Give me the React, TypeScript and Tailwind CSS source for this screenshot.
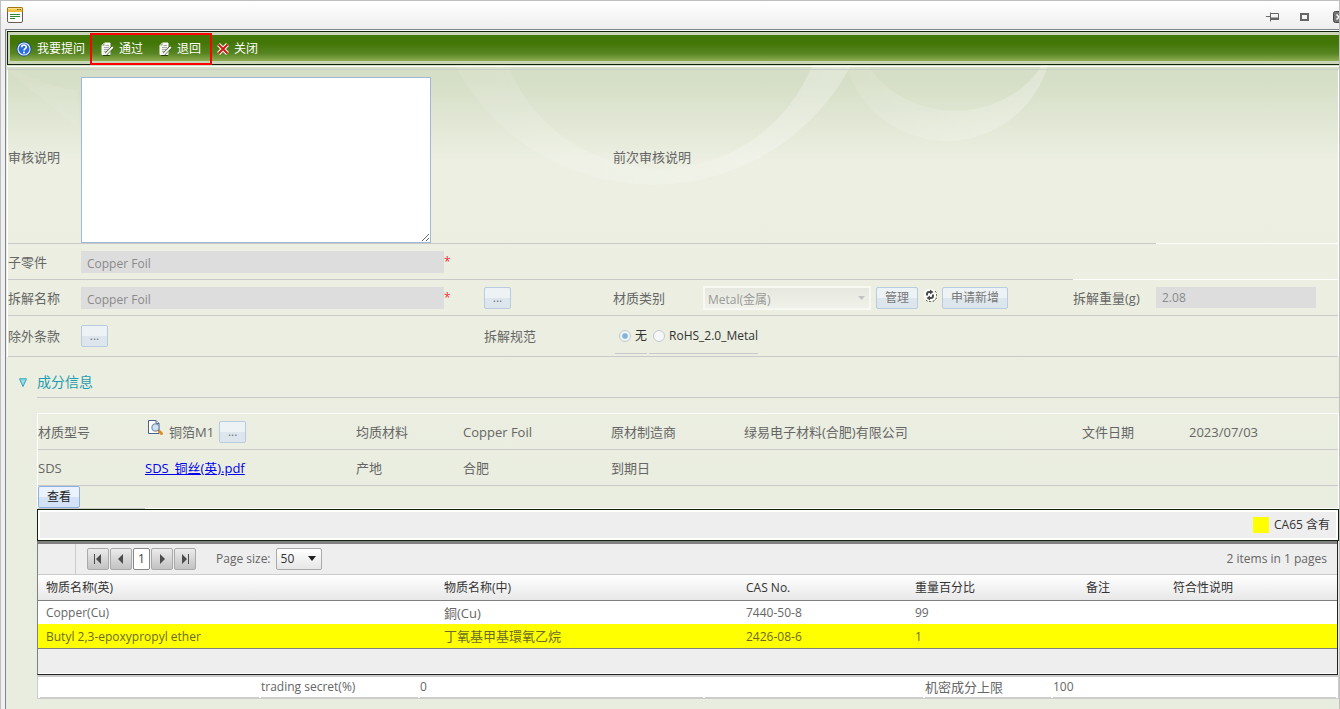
import type { ReactNode } from "react"
import { clsx } from "clsx"

const substances = [
  { en: "Copper(Cu)", zh: "銅(Cu)", cas: "7440-50-8", percent: "99", flagged: false },
  { en: "Butyl 2,3-epoxypropyl ether", zh: "丁氧基甲基環氧乙烷", cas: "2426-08-6", percent: "1", flagged: true },
]

/* ---------- icons ---------- */

function FormIcon() {
  return (
    <svg width="16" height="16" viewBox="0 0 16 16">
      <rect x="0.5" y="0.5" width="15" height="15" rx="1.5" fill="#fff" stroke="#6b5a52" />
      <path d="M1 1h14v4H1z" fill="#f4c03c" />
      <path d="M1 1h14v1.5H1z" fill="#fbe08a" />
      <path d="M.5 5V1.5a1 1 0 0 1 1-1h13a1 1 0 0 1 1 1V5" fill="none" stroke="#a8760e" />
      <path d="M10 2h1.5v1H10zM12.5 2H14v1h-1.5z" fill="#7a5a10" />
      <path d="M3 7.5h10M3 9.5h10M3 11.5h5" stroke="#2f8a2f" />
    </svg>
  )
}

function HelpIcon() {
  return (
    <svg width="16" height="16" viewBox="0 0 16 16">
      <circle cx="8" cy="8" r="7.5" fill="#1b4f8f" />
      <circle cx="8" cy="8" r="6" fill="#2a6be0" stroke="#dcebff" strokeWidth="1.2" />
      <path d="M5.7 6.3C5.7 3.3 10.4 3.4 10.3 6.1 10.2 7.7 8 7.6 8 9.6" fill="none" stroke="#fff" strokeWidth="1.6" />
      <circle cx="8" cy="11.6" r="1" fill="#fff" />
    </svg>
  )
}

function EditIcon() {
  return (
    <svg width="13" height="14" viewBox="0 0 13 14">
      <path d="M3.5 1H9v11.5H1V3.5z" fill="#f2f2f2" stroke="#fff" />
      <path d="M1 3.5 3.5 1v2.5z" fill="#9aa88a" />
      <path d="M4.5 3.5H8M3 5.5h5M3 7.5h4M3 9.5h3" stroke="#aaa" />
      <path d="m5 12 6.5-7" stroke="#24420a" strokeWidth="3" />
      <path d="m4.8 12.2 7-7.2" stroke="#fff" strokeWidth="1.8" />
      <path d="M2 13.5h7" stroke="#24420a" />
    </svg>
  )
}

function CrossIcon() {
  return (
    <svg width="12" height="12" viewBox="0 0 12 12">
      <path d="m1.5 1.5 9 9M10.5 1.5l-9 9" stroke="#fff" strokeWidth="4" />
      <path d="m1.5 1.5 9 9M10.5 1.5l-9 9" stroke="#d3150c" strokeWidth="2" />
    </svg>
  )
}

function RefreshIcon() {
  return (
    <svg width="14" height="14" viewBox="0 0 14 14">
      <circle cx="7" cy="7" r="6.2" fill="#fff" />
      <path d="M12 3a6.3 6.3 0 0 1-9 9" fill="none" stroke="#2f4a12" strokeDasharray="2 1.5" />
      <path d="M8 4H6a2 2 0 0 0-2 2v1.5M6 10h2a2 2 0 0 0 2-2V6.500" fill="none" stroke="#4a4a4a" strokeWidth="2" />
      <path d="M7 1.5 10.5 4 7 6.5zM7 7.5 3.5 10 7 12.5z" fill="#4a4a4a" />
    </svg>
  )
}

function PreviewIcon() {
  return (
    <svg width="16" height="16" viewBox="0 0 16 16">
      <path d="M.5.5H8l3 3v10H.5z" fill="#fff" stroke="#4b6488" />
      <path d="M8 .5v3h3" fill="#d5e1f2" stroke="#4b6488" />
      <circle cx="7.5" cy="7.5" r="3.6" fill="#cfe2f5" stroke="#8296ab" strokeWidth="1.3" />
      <path d="m10.3 10.3 1.7 1.7" stroke="#55697f" strokeWidth="1.5" />
      <path d="m11.5 11.5 2 2" stroke="#e08a22" strokeWidth="3" strokeLinecap="round" />
    </svg>
  )
}

function PinIcon() {
  return (
    <svg width="14" height="10" viewBox="0 0 14 10">
      <path d="M0 4.5h4.5M4.5.5v9M5 1.5h7.5v6H5" fill="none" stroke="#666" />
      <path d="M5 5.5h8V8H5z" fill="#666" />
    </svg>
  )
}

function CloseIcon() {
  return (
    <svg width="12" height="12" viewBox="0 0 12 12">
      <rect x="0.5" y="0.5" width="11" height="11" rx="2" fill="#777" stroke="#444" />
      <path d="m3.5 3.5 5 5M8.5 3.5l-5 5" stroke="#fff" strokeWidth="1.5" />
    </svg>
  )
}

/* pale rings behind the top of the form */
function Swirls() {
  return (
    <svg className="pointer-events-none absolute left-0 top-0" width="1100" height="180" viewBox="6 30 1100 180">
      <defs>
        <linearGradient id="ring" x1="0" x2="1" y1="0" y2="0">
          <stop offset="0" stopColor="#fff" stopOpacity="0.08" />
          <stop offset="1" stopColor="#fff" stopOpacity="0.28" />
        </linearGradient>
      </defs>
      <path d="M440 30A224 224 0 0 0 866 30H822A164 164 0 0 1 498 30z" fill="url(#ring)" />
      <path d="M842 36A105 105 0 0 0 1052 36H1053A99 87 0 0 1 857 36z" fill="url(#ring)" />
      <path d="M8 70c20 20 40 30 70 60V90C55 90 30 75 8 68z" fill="#fff" fillOpacity="0.08" />
    </svg>
  )
}

/* ---------- small controls ---------- */

function ToolbarButton({ icon, children }: { icon: ReactNode; children: ReactNode }) {
  return (
    <button type="button" className="flex items-center gap-[5px] text-xs text-white">
      {icon}
      {children}
    </button>
  )
}

function FormButton({ children, wide, muted = true }: { children: ReactNode; wide?: boolean; muted?: boolean }) {
  return (
    <button
      type="button"
      className={clsx(
        "h-[22px] shrink-0 rounded-xs border text-xs leading-5",
        wide ? "px-2" : "w-[27px]",
        muted
          ? "border-[#b8cbe0] bg-linear-to-b from-[#edf2f4] from-50% to-[#dde6ec] to-50% text-[#777]"
          : "border-[#8fb0dc] bg-linear-to-b from-[#eaf2fd] from-50% to-[#d3e2f6] to-50% text-[#222]"
      )}
    >
      {children}
    </button>
  )
}

function Cell({ children, className, blank }: { children?: ReactNode; className?: string; blank?: boolean }) {
  return (
    <div className={clsx("flex items-center border-b", blank ? "border-white" : "border-[#c9c9c9]", className)}>
      {children}
    </div>
  )
}

function PagerButton({ label, d }: { label: string; d: string }) {
  return (
    <button
      type="button"
      aria-label={label}
      className="flex h-[22px] w-[22px] items-center justify-center rounded-xs border border-[#aaa] bg-linear-to-b from-[#ececec] to-[#c2c2c2]"
    >
      <svg width="10" height="10" viewBox="0 0 10 10">
        <path d={d} fill="#4c4c4c" />
      </svg>
    </button>
  )
}

const disabledInput = "bg-[#ddd] px-1.5 text-xs text-[#8a8a8a]"

function ReviewForm() {
  return (
    <form className="grid grid-cols-[73px_403px_129px_90px_370px_83px_1fr] border-x border-t border-x-white border-t-[#c9cfc4]">
      <Cell className="h-[174px]">
        <label htmlFor="note">审核说明</label>
      </Cell>
      <Cell className="pt-[7px]">
        <textarea id="note" className="block h-[166px] w-[350px] border border-[#a0b8d8] bg-white p-1 text-xs" />
      </Cell>
      <Cell />
      <Cell className="col-span-3">前次审核说明</Cell>
      <Cell blank />

      <Cell className="h-9">
        <label htmlFor="part">子零件</label>
      </Cell>
      <Cell className="col-span-4">
        <input id="part" disabled defaultValue="Copper Foil" className={clsx(disabledInput, "h-[22px] w-[363px] pt-1")} />
        <span className="text-xs text-red-500">*</span>
      </Cell>
      <Cell blank className="col-span-2" />

      <Cell className="h-9">
        <label htmlFor="name">拆解名称</label>
      </Cell>
      <Cell>
        <input id="name" disabled defaultValue="Copper Foil" className={clsx(disabledInput, "h-[22px] w-[363px] pt-1")} />
        <span className="text-xs text-red-500">*</span>
      </Cell>
      <Cell>
        <FormButton>...</FormButton>
      </Cell>
      <Cell>
        <label htmlFor="category">材质类别</label>
      </Cell>
      <Cell>
        <div className="relative mr-[5px]">
          <select
            id="category"
            disabled
            className="block h-6 w-[168px] appearance-none border-2 border-[#f7f8f2] bg-linear-to-b from-[#e6e8df] to-[#f0f2ea] px-[3px] pt-1 text-xs text-[#999] opacity-100"
          >
            <option>Metal(金属)</option>
          </select>
          <svg className="pointer-events-none absolute right-1.5 top-2.5" width="7" height="4" viewBox="0 0 7 4">
            <path d="M0 0h7L3.5 4z" fill="#c4c4c4" />
          </svg>
        </div>
        <FormButton wide>管理</FormButton>
        <button type="button" aria-label="刷新" className="mx-[5px] pb-1.5">
          <RefreshIcon />
        </button>
        <FormButton wide>申请新增</FormButton>
      </Cell>
      <Cell>
        <label htmlFor="weight">拆解重量(g)</label>
      </Cell>
      <Cell>
        <input id="weight" disabled defaultValue="2.08" className={clsx(disabledInput, "h-[21px] w-40")} />
      </Cell>

      <Cell className="h-[41px]">除外条款</Cell>
      <Cell>
        <FormButton>...</FormButton>
      </Cell>
      <Cell>拆解规范</Cell>
      <Cell className="col-span-4 items-end gap-0.5 pb-0.5 pl-0.5 text-xs text-[#333]">
        {["无", "RoHS_2.0_Metal"].map((spec, i) => (
          <label key={spec} className="flex h-9 items-center gap-1 border-b border-[#c9c9c9] pl-1">
            <input
              type="radio"
              name="spec"
              defaultChecked={i === 0}
              className="h-3 w-3 appearance-none rounded-full border border-[#c4c8cc] bg-[#f6f7f8] checked:bg-radial checked:from-[#7fb2d6] checked:from-30% checked:to-[#eef3f6] checked:to-50%"
            />
            {spec}
          </label>
        ))}
      </Cell>
    </form>
  )
}

function MaterialInfo() {
  return (
    <div className="grid grid-cols-[107px_211px_107px_148px_133px_338px_107px_1fr] border-l border-t border-r border-white">
      <Cell className="h-9">材质型号</Cell>
      <Cell>
        <span className="mr-[5px] pb-2 pl-[3px]">
          <PreviewIcon />
        </span>
        <span className="mr-[5px]">铜箔M1</span>
        <FormButton>...</FormButton>
      </Cell>
      <Cell>均质材料</Cell>
      <Cell>Copper Foil</Cell>
      <Cell>原材制造商</Cell>
      <Cell>绿易电子材料(合肥)有限公司</Cell>
      <Cell>文件日期</Cell>
      <Cell>2023/07/03</Cell>

      <Cell className="h-9">SDS</Cell>
      <Cell>
        <a href="#sds" className="text-[#0000ee] underline">
          SDS_铜丝(英).pdf
        </a>
      </Cell>
      <Cell>产地</Cell>
      <Cell>合肥</Cell>
      <Cell className="col-span-4">到期日</Cell>

      <Cell>
        <FormButton wide muted={false}>
          查看
        </FormButton>
      </Cell>
      <Cell blank className="col-span-7" />
    </div>
  )
}

function SubstanceGrid() {
  return (
    <div className="mr-px border-x border-b border-l-[#808080] border-r-[#222] border-b-[#222] bg-white">
      <div className="flex h-[34px] items-center border-b border-t-3 border-b-[#ccc] border-t-[#808080] bg-[#eee] pr-2.5 text-xs text-[#666]">
        <span className="mr-[11px] w-[38px] self-stretch border-r border-[#ccc]" />
        <div className="flex gap-px">
          <PagerButton label="First page" d="M1 0h1v10H1zM8 0v10L3 5z" />
          <PagerButton label="Previous page" d="M7 0v10L2 5z" />
          <button type="button" className="h-[22px] w-[17px] rounded-xs border border-[#888] bg-white text-[#444]">
            1
          </button>
          <PagerButton label="Next page" d="M3 0v10l5-5z" />
          <PagerButton label="Last page" d="M8 0h1v10H8zM2 0v10l5-5z" />
        </div>
        <label htmlFor="page-size" className="ml-5 mr-[5px]">
          Page size:
        </label>
        <div className="relative">
          <select
            id="page-size"
            className="block h-[22px] w-[46px] appearance-none rounded-xs border border-[#aaa] bg-linear-to-b from-white to-[#e6e6e6] px-1 text-xs text-[#333]"
          >
            <option>50</option>
          </select>
          <svg className="pointer-events-none absolute right-1.5 top-2" width="8" height="5" viewBox="0 0 8 5">
            <path d="M0 0h8L4 5z" fill="#222" />
          </svg>
        </div>
        <span className="ml-auto">2 items in 1 pages</span>
      </div>
      <table className="w-full table-fixed border-collapse text-left text-xs">
        <colgroup>
          <col className="w-[398px]" />
          <col className="w-[302px]" />
          <col className="w-[169px]" />
          <col className="w-[171px]" />
          <col className="w-[87px]" />
          <col />
        </colgroup>
        <thead className="bg-linear-to-b from-white to-[#e8e8e8] text-[#333]">
          <tr className="h-[25px] border-b border-[#808080]">
            {["物质名称(英)", "物质名称(中)", "CAS No.", "重量百分比", "备注", "符合性说明"].map((head) => (
              <th key={head} className="px-2 pt-0.5 font-normal">
                {head}
              </th>
            ))}
          </tr>
        </thead>
        <tbody className="text-[#666]">
          {substances.map((row) => (
            <tr key={row.cas} className={clsx("h-6", row.flagged && "bg-[#ffff00] text-[#6b6b2a]")}>
              <td className="px-2 pt-0.5">{row.en}</td>
              <td className="px-2 pt-0.5 text-[13px]">{row.zh}</td>
              <td className="px-2 pt-0.5">{row.cas}</td>
              <td className="px-2 pt-0.5">{row.percent}</td>
              <td />
              <td />
            </tr>
          ))}
        </tbody>
      </table>
      <div className="h-[26px] border-b border-t border-b-white border-t-[#808080] bg-[#eee]" />
    </div>
  )
}

function SecretLimits() {
  const line = "border-b border-[#ccc]"
  return (
    <div className="grid h-6 grid-cols-[219px_157px_283px_218px_126px_1fr] gap-0.5 border border-t-2 border-[#ccc] bg-white px-0.5 pb-0.5 text-xs leading-5">
      <span className={line} />
      <span className={line}>trading secret(%)</span>
      <span className={line}>0</span>
      <span className={line} />
      <span className={clsx(line, "text-[13px] leading-5")}>机密成分上限</span>
      <span className={line}>100</span>
    </div>
  )
}

export default function App() {
  return (
    <div className="flex min-h-screen flex-col overflow-hidden border border-[#bfbfbf] bg-[#f0f0f0] font-['Open_Sans','Noto_Sans_CJK_SC',sans-serif] text-[13px] leading-5 text-[#666]">
      <header className="flex h-7 shrink-0 items-center bg-linear-to-b from-white to-[#eee] pl-1.5">
        <FormIcon />
        <div className="-mr-1.5 ml-auto flex items-center gap-5 pt-1">
          <button type="button" aria-label="Pin">
            <PinIcon />
          </button>
          <button type="button" aria-label="Maximize" className="h-2 w-[9px] border-2 border-[#666]" />
          <button type="button" aria-label="Close" className="ml-1">
            <CloseIcon />
          </button>
        </div>
      </header>

      <main className="relative ml-1 grow border-l border-t border-[#7d8790] bg-linear-to-b from-[#d5dec6] from-[50px] via-[#ecefe2] via-[130px] to-[#e9ede0] pl-px">
        <Swirls />
        <div className="relative border-t border-white">
          <nav className="flex h-[34px] items-center border-y border-l border-[#14230c] bg-[#cbd6b8] py-[3px] pl-0.5">
            <div className="flex h-full grow items-center bg-linear-to-b from-[#427606] from-30% via-[#568420] via-70% to-[#8dad50] pl-1.5 pt-0.5">
              <ToolbarButton icon={<HelpIcon />}>我要提问</ToolbarButton>
              <div className="relative ml-1 flex gap-4 px-3">
                <ToolbarButton icon={<EditIcon />}>通过</ToolbarButton>
                <ToolbarButton icon={<EditIcon />}>退回</ToolbarButton>
                <span className="pointer-events-none absolute -inset-y-2 inset-x-px border-2 border-[#f00]" />
              </div>
              <div className="ml-1">
                <ToolbarButton icon={<CrossIcon />}>关闭</ToolbarButton>
              </div>
            </div>
          </nav>
          <div className="mt-px h-[3px] border-t border-white" />

          <ReviewForm />

          <section className="pl-[30px]">
            <div className="flex h-[41px] items-center border-b border-[#c9c9c9]">
              <h2 className="-ml-[18px] flex items-center gap-2.5 pt-2.5 text-sm text-[#1f9daf]">
                <svg width="8" height="9" viewBox="0 0 8 9">
                  <path d="M.5.8h7L4 8.5z" fill="#9bdbe5" stroke="#2da5b8" />
                </svg>
                成分信息
              </h2>
            </div>
            <div className="pb-2.5 pt-[15px]">
              <MaterialInfo />
              <div className="flex h-8 items-center justify-end gap-[5px] border border-[#14230c] bg-[#eee] pr-2 text-xs text-[#333] ring-2 ring-white ring-inset">
                <span className="h-4 w-4 bg-[#ffff00]" />
                CA65 含有
              </div>
              <SubstanceGrid />
              <SecretLimits />
            </div>
          </section>
        </div>
      </main>
    </div>
  )
}
